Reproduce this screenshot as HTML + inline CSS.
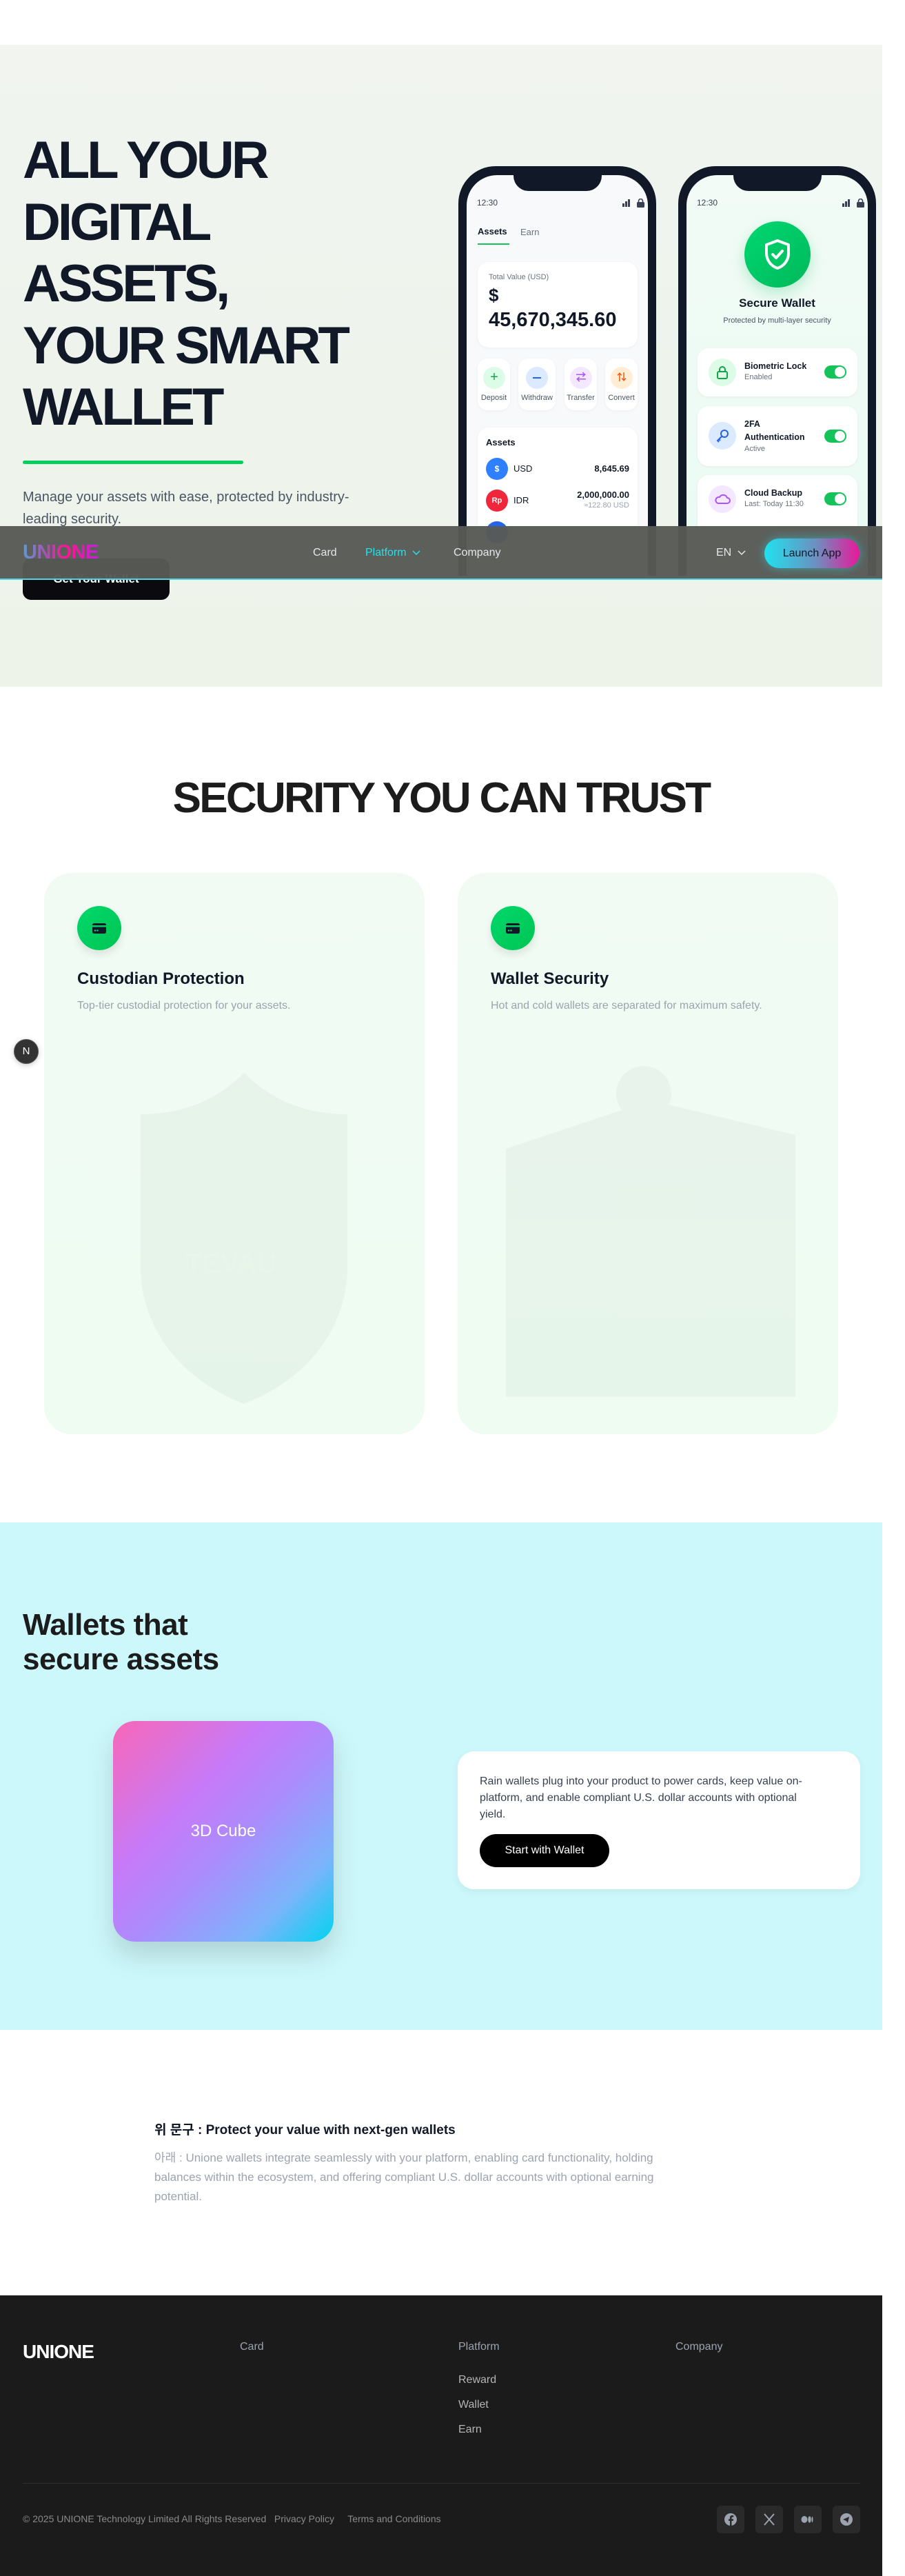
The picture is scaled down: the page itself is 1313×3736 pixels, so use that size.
<!DOCTYPE html>
<html><head><meta charset="utf-8">
<style>
*{margin:0;padding:0;box-sizing:border-box}
html,body{width:1313px;height:3736px;background:#fff;font-family:"Liberation Sans","Noto Sans CJK KR",sans-serif;overflow:hidden}
.wrap{position:relative;width:1280px;height:3736px;overflow:hidden}
.abs{position:absolute}
.hero{position:absolute;left:0;top:65px;width:1280px;height:931px;background:linear-gradient(180deg,#f1f4ef 0%,#eef3ec 60%,#eef3ea 100%);overflow:hidden}
.h1{position:absolute;left:33px;top:123px;font-size:76px;line-height:89.5px;font-weight:900;color:#111827;letter-spacing:-4px}
.clip{position:absolute;left:0;top:0;width:1280px;height:770px;overflow:hidden}
.phone{position:absolute;top:176px;width:287px;height:720px;background:#111827;border-radius:54px;padding:13px 12px}
.screen{width:100%;height:100%;border-radius:44px;background:#f8f9fb;position:relative;overflow:hidden}
.notch{position:absolute;left:68px;top:-2px;width:128px;height:25px;background:#111827;border-radius:0 0 22px 22px}
.t{position:absolute;font-size:12px;color:#374151}
.card{position:absolute;background:#fff;border-radius:14px;box-shadow:0 1px 4px rgba(0,0,0,.05)}
.circ{position:absolute;border-radius:50%}
.tog{position:absolute;width:32px;height:19px;border-radius:10px;background:#16c35a}
.tog:after{content:"";position:absolute;right:2px;top:2px;width:15px;height:15px;border-radius:50%;background:#fff}
.nav{position:absolute;left:0;top:763px;width:1280px;height:78px;background:rgba(88,90,86,.97);border-bottom:2px solid #4fd6df}
.sec-title{position:absolute;left:0;width:1280px;top:1122px;text-align:center;font-size:62px;font-weight:900;letter-spacing:-2.7px;color:#1c1c1c}
.fcard{position:absolute;top:1266px;width:552px;height:814px;border-radius:40px;background:linear-gradient(180deg,#f1fbf4,#eefcf2)}
.ic{position:absolute;left:48px;top:48px;width:64px;height:64px;border-radius:50%;background:linear-gradient(135deg,#00d86c,#00c553);box-shadow:0 6px 12px rgba(0,0,0,.1)}
</style></head><body><div class="wrap">

<div class="hero">
  <div class="h1">ALL YOUR<br>DIGITAL<br>ASSETS,<br>YOUR SMART<br>WALLET</div>
  <div class="abs" style="left:33px;top:603px;width:320px;height:5px;border-radius:3px;background:#00cf5c"></div>
  <div class="abs" style="left:33px;top:640px;width:525px;font-size:20px;line-height:32px;color:#4b5563">Manage your assets with ease, protected by industry-leading security.</div>
  <div class="abs" style="left:33px;top:745px;width:213px;height:60px;border-radius:12px;background:#0a0a0f;color:#fff;font-size:17px;font-weight:700;text-align:center;line-height:60px">Get Your Wallet</div>

 <div class="clip">
  <!-- left phone -->
  <div class="phone" style="left:665px">
    <div class="screen">
      <div class="notch"></div>
      <div class="t" style="left:15px;top:33px">12:30</div>
      <svg class="abs" style="left:226px;top:34px" width="34" height="13"><rect x="0" y="7" width="3" height="5" fill="#374151"/><rect x="4" y="4" width="3" height="8" fill="#374151"/><rect x="8" y="1" width="3" height="11" fill="#374151"/><rect x="21" y="5" width="11" height="8" rx="1.5" fill="#374151"/><path d="M23.5 5V3.5a3 3 0 0 1 6 0V5" stroke="#374151" stroke-width="1.6" fill="none"/></svg>
      <div class="t" style="left:16px;top:74px;font-size:13px;font-weight:700;color:#111827">Assets</div>
      <div class="t" style="left:78px;top:75px;font-size:13px;color:#6b7280">Earn</div>
      <div class="abs" style="left:16px;top:99px;width:46px;height:2px;background:#16c35a"></div>
      <div class="card" style="left:16px;top:126px;width:232px;height:124px;border-radius:16px">
        <div class="t" style="left:16px;top:16px;font-size:11px;color:#6b7280">Total Value (USD)</div>
        <div class="t" style="left:16px;top:33px;font-size:26px;font-weight:700;color:#111827">$</div>
        <div class="t" style="left:16px;top:68px;font-size:29px;font-weight:700;color:#111827;white-space:nowrap">45,670,345.60</div>
      </div>
      <div class="card" style="left:16px;top:266px;width:47px;height:75px"><div class="circ" style="left:8px;top:12px;width:32px;height:32px;background:#dcfce7;color:#16a34a;text-align:center;line-height:31px;font-size:20px">+</div><div class="t" style="left:0;width:47px;text-align:center;top:51px;font-size:11px;color:#4b5563">Deposit</div></div>
      <div class="card" style="left:75px;top:266px;width:54px;height:75px"><div class="circ" style="left:11px;top:12px;width:32px;height:32px;background:#dbeafe"><div class="abs" style="left:10px;top:15px;width:12px;height:2px;background:#2563eb"></div></div><div class="t" style="left:-4px;width:62px;text-align:center;top:51px;font-size:11px;color:#4b5563">Withdraw</div></div>
      <div class="card" style="left:142px;top:266px;width:47px;height:75px"><div class="circ" style="left:8px;top:12px;width:32px;height:32px;background:#f3e8ff;color:#a855f7;text-align:center;line-height:31px;font-size:15px;font-weight:700">⇄</div><div class="t" style="left:-4px;width:55px;text-align:center;top:51px;font-size:11px;color:#4b5563">Transfer</div></div>
      <div class="card" style="left:201px;top:266px;width:47px;height:75px"><div class="circ" style="left:8px;top:12px;width:32px;height:32px;background:#ffedd5;color:#ea580c;text-align:center;line-height:31px;font-size:14px;font-weight:700">⇅</div><div class="t" style="left:-4px;width:55px;text-align:center;top:51px;font-size:11px;color:#4b5563">Convert</div></div>
      <div class="card" style="left:16px;top:366px;width:232px;height:260px;border-radius:16px">
        <div class="t" style="left:12px;top:14px;font-size:13px;font-weight:700;color:#111827">Assets</div>
        <div class="circ" style="left:12px;top:44px;width:32px;height:32px;background:#2f80ff;color:#fff;text-align:center;line-height:32px;font-size:12px;font-weight:700">$</div>
        <div class="t" style="left:52px;top:52px;font-size:13px;color:#111827">USD</div>
        <div class="t" style="right:12px;top:52px;font-size:13px;font-weight:700;color:#111827">8,645.69</div>
        <div class="circ" style="left:12px;top:90px;width:32px;height:32px;background:#f0263a;color:#fff;text-align:center;line-height:32px;font-size:11px;font-weight:700">Rp</div>
        <div class="t" style="left:52px;top:98px;font-size:13px;color:#111827">IDR</div>
        <div class="t" style="right:12px;top:90px;font-size:13px;font-weight:700;color:#111827">2,000,000.00</div>
        <div class="t" style="right:12px;top:107px;font-size:11px;color:#9ca3af">≈122.80 USD</div>
        <div class="circ" style="left:12px;top:136px;width:32px;height:32px;background:#2563eb"></div>
      </div>
    </div>
  </div>

  <!-- right phone -->
  <div class="phone" style="left:984px">
    <div class="screen" style="background:linear-gradient(180deg,#f2fbf6,#e8fbf2)">
      <div class="notch"></div>
      <div class="t" style="left:15px;top:33px">12:30</div>
      <svg class="abs" style="left:226px;top:34px" width="34" height="13"><rect x="0" y="7" width="3" height="5" fill="#374151"/><rect x="4" y="4" width="3" height="8" fill="#374151"/><rect x="8" y="1" width="3" height="11" fill="#374151"/><rect x="21" y="5" width="11" height="8" rx="1.5" fill="#374151"/><path d="M23.5 5V3.5a3 3 0 0 1 6 0V5" stroke="#374151" stroke-width="1.6" fill="none"/></svg>
      <div class="circ" style="left:84px;top:67px;width:96px;height:96px;background:linear-gradient(135deg,#00d872,#00b85a);box-shadow:0 8px 20px rgba(0,190,90,.25)">
        <svg width="96" height="96" viewBox="0 0 96 96"><path d="M48 28l16 6v12c0 11-7 19-16 22-9-3-16-11-16-22V34z" fill="none" stroke="#fff" stroke-width="4" stroke-linejoin="round"/><path d="M41 48l5 5 9-10" fill="none" stroke="#fff" stroke-width="4" stroke-linecap="round" stroke-linejoin="round"/></svg>
      </div>
      <div class="t" style="left:0;width:263px;text-align:center;top:176px;font-size:17px;font-weight:700;color:#111827">Secure Wallet</div>
      <div class="t" style="left:0;width:263px;text-align:center;top:205px;font-size:11px;color:#4b5563">Protected by multi-layer security</div>
      <div class="card" style="left:16px;top:251px;width:232px;height:70px;border-radius:16px">
        <div class="circ" style="left:16px;top:15px;width:40px;height:40px;background:#dcfce7"><svg width="40" height="40"><rect x="13" y="19" width="14" height="10" rx="2" fill="none" stroke="#16a34a" stroke-width="2"/><path d="M16 19v-3a4 4 0 0 1 8 0v3" fill="none" stroke="#16a34a" stroke-width="2"/></svg></div>
        <div class="t" style="left:68px;top:19px;font-size:12.5px;font-weight:700;color:#111827">Biometric Lock</div>
        <div class="t" style="left:68px;top:36px;font-size:11px;color:#6b7280">Enabled</div>
        <div class="tog" style="left:184px;top:25px"></div>
      </div>
      <div class="card" style="left:16px;top:335px;width:232px;height:87px;border-radius:16px">
        <div class="circ" style="left:16px;top:23px;width:40px;height:40px;background:#dbeafe"><svg width="40" height="40"><circle cx="23" cy="17" r="5" fill="none" stroke="#2563eb" stroke-width="2"/><path d="M19.5 20.5L13 27l2 2M15 25l2 2" fill="none" stroke="#2563eb" stroke-width="2"/></svg></div>
        <div class="t" style="left:68px;top:17px;font-size:12.5px;font-weight:700;color:#111827;line-height:19px">2FA<br>Authentication</div>
        <div class="t" style="left:68px;top:56px;font-size:11px;color:#6b7280">Active</div>
        <div class="tog" style="left:184px;top:34px"></div>
      </div>
      <div class="card" style="left:16px;top:435px;width:232px;height:90px;border-radius:16px">
        <div class="circ" style="left:16px;top:15px;width:40px;height:40px;background:#f3e8ff"><svg width="40" height="40"><path d="M14 26h13a4 4 0 0 0 0-8 6 6 0 0 0-11-1 4.5 4.5 0 0 0-2 9z" fill="none" stroke="#a855f7" stroke-width="2"/></svg></div>
        <div class="t" style="left:68px;top:19px;font-size:12.5px;font-weight:700;color:#111827">Cloud Backup</div>
        <div class="t" style="left:68px;top:36px;font-size:11px;color:#6b7280">Last: Today 11:30</div>
        <div class="tog" style="left:184px;top:25px"></div>
      </div>
    </div>
  </div>
 </div>
</div>

<!-- nav -->
<div class="nav">
  <div class="abs" style="left:33px;top:22px;font-size:29px;font-weight:700;letter-spacing:-0.5px;background:linear-gradient(90deg,#5b9bd5,#c03ca8 40%,#ff1493 60%,#c81ee0);-webkit-background-clip:text;background-clip:text;color:transparent">UNIONE</div>
  <div class="abs" style="left:454px;top:30px;font-size:16px;color:#e5e7eb">Card</div>
  <div class="abs" style="left:530px;top:30px;font-size:16px;color:#22e3ee">Platform <svg width="12" height="8" style="margin-left:4px"><path d="M1 1l5 5 5-5" fill="none" stroke="#22e3ee" stroke-width="1.5"/></svg></div>
  <div class="abs" style="left:658px;top:30px;font-size:16px;color:#e5e7eb">Company</div>
  <div class="abs" style="left:1039px;top:30px;font-size:16px;color:#e5e7eb">EN <svg width="12" height="8" style="margin-left:4px"><path d="M1 1l5 5 5-5" fill="none" stroke="#e5e7eb" stroke-width="1.5"/></svg></div>
  <div class="abs" style="left:1109px;top:18px;width:138px;height:43px;border-radius:22px;background:linear-gradient(90deg,#1fe2ee,#6e8ec0 55%,#e8189a);box-shadow:0 0 14px rgba(31,226,238,.5);color:#111827;font-size:16px;text-align:center;line-height:43px">Launch App</div>
</div>

<!-- security -->
<div class="sec-title">SECURITY YOU CAN TRUST</div>
<div class="fcard" style="left:64px">
  <div class="ic"><svg width="64" height="64"><rect x="22" y="25" width="20" height="15" rx="2.5" fill="#111827"/><rect x="22" y="28" width="20" height="2.5" fill="#00d065"/><circle cx="26" cy="35.5" r="1.3" fill="#00d065"/><circle cx="29.5" cy="35.5" r="1.3" fill="#00d065"/></svg></div>
  <div class="abs" style="left:48px;top:140px;font-size:24px;font-weight:700;color:#111827">Custodian Protection</div>
  <div class="abs" style="left:48px;top:184px;font-size:16px;color:#9ca3af">Top-tier custodial protection for your assets.</div>
  <svg class="abs" style="left:90px;top:280px;opacity:.035" width="400" height="500"><path d="M200 10c40 40 90 60 150 60v220c0 100-70 170-150 200C120 460 50 390 50 290V70c60 0 110-20 150-60z" fill="#1a3a1a"/><text x="115" y="300" font-size="40" font-weight="900" fill="#4a7a2a" font-family="Liberation Sans">TEVAU</text></svg>
</div>
<div class="fcard" style="left:664px">
  <div class="ic"><svg width="64" height="64"><rect x="22" y="25" width="20" height="15" rx="2.5" fill="#111827"/><rect x="22" y="28" width="20" height="2.5" fill="#00d065"/><circle cx="26" cy="35.5" r="1.3" fill="#00d065"/><circle cx="29.5" cy="35.5" r="1.3" fill="#00d065"/></svg></div>
  <div class="abs" style="left:48px;top:140px;font-size:24px;font-weight:700;color:#111827">Wallet Security</div>
  <div class="abs" style="left:48px;top:184px;font-size:16px;color:#9ca3af">Hot and cold wallets are separated for maximum safety.</div>
  <svg class="abs" style="left:60px;top:270px;opacity:.03" width="440" height="500"><path d="M10 130l210-70 210 50v380H10z" fill="#1a3a1a"/><circle cx="210" cy="50" r="40" fill="#1a3a1a"/></svg>
</div>
<div class="circ" style="left:20px;top:1507px;width:36px;height:36px;background:#333;border:1px solid #555;color:#fff;text-align:center;line-height:34px;font-size:15px;box-shadow:0 2px 8px rgba(0,0,0,.2)">N</div>

<!-- wallets -->
<div class="abs" style="left:0;top:2208px;width:1280px;height:736px;background:#cdf8fb">
  <div class="abs" style="left:33px;top:124px;font-size:44px;font-weight:700;line-height:50px;color:#1c1c1c;letter-spacing:-0.5px">Wallets that<br>secure assets</div>
  <div class="abs" style="left:164px;top:288px;width:320px;height:320px;border-radius:32px;background:linear-gradient(135deg,#f867b8 0%,#c77af8 35%,#ab8cfd 55%,#7cb4fb 80%,#00d4f0 100%);box-shadow:0 20px 40px rgba(0,0,0,.15);color:#fff;font-size:24px;text-align:center;line-height:320px">3D Cube</div>
  <div class="abs" style="left:664px;top:332px;width:584px;height:200px;border-radius:24px;background:#fff;box-shadow:0 4px 12px rgba(0,0,0,.06)">
    <div class="abs" style="left:32px;top:32px;width:488px;font-size:16px;line-height:24px;color:#374151">Rain wallets plug into your product to power cards, keep value on-platform, and enable compliant U.S. dollar accounts with optional yield.</div>
    <div class="abs" style="left:32px;top:120px;width:188px;height:48px;border-radius:24px;background:#000;color:#fff;font-size:16px;text-align:center;line-height:48px">Start with Wallet</div>
  </div>
</div>

<!-- quote -->
<div class="abs" style="left:224px;top:3074px;font-size:19px;font-weight:700;color:#111827">위 문구 : Protect your value with next-gen wallets</div>
<div class="abs" style="left:224px;top:3116px;width:780px;font-size:17px;line-height:28px;color:#9ca3af">아래 : Unione wallets integrate seamlessly with your platform, enabling card functionality, holding balances within the ecosystem, and offering compliant U.S. dollar accounts with optional earning potential.</div>

<!-- footer -->
<div class="abs" style="left:0;top:3329px;width:1280px;height:407px;background:#1b1b1b">
  <div class="abs" style="left:33px;top:66px;font-size:28px;font-weight:700;color:#fff;letter-spacing:-1px">UNIONE</div>
  <div class="abs" style="left:348px;top:66px;font-size:16px;color:#9ca3af">Card</div>
  <div class="abs" style="left:665px;top:66px;font-size:16px;color:#9ca3af">Platform</div>
  <div class="abs" style="left:980px;top:66px;font-size:16px;color:#9ca3af">Company</div>
  <div class="abs" style="left:665px;top:114px;font-size:16px;color:#b5b5b5">Reward</div>
  <div class="abs" style="left:665px;top:150px;font-size:16px;color:#b5b5b5">Wallet</div>
  <div class="abs" style="left:665px;top:186px;font-size:16px;color:#b5b5b5">Earn</div>
  <div class="abs" style="left:33px;top:272px;width:1215px;height:1px;background:#2e2e2e"></div>
  <div class="abs" style="left:33px;top:316px;font-size:14px;color:#8a8a8a;white-space:nowrap">© 2025 UNIONE Technology Limited All Rights Reserved &nbsp;&nbsp;Privacy Policy &nbsp;&nbsp;&nbsp; Terms and Conditions</div>
  <div class="abs" style="left:1040px;top:305px;width:40px;height:40px;border-radius:6px;background:#2a2a2a"><svg width="40" height="40"><circle cx="20" cy="20" r="9" fill="#9ca3af"/><path d="M21.5 29v-7h2.3l.4-2.6h-2.7v-1.6c0-.8.3-1.3 1.4-1.3h1.4v-2.3a14 14 0 0 0-2-.2c-2 0-3.3 1.2-3.3 3.4v2H17V22h2v7z" fill="#2a2a2a"/></svg></div>
  <div class="abs" style="left:1096px;top:305px;width:40px;height:40px;border-radius:6px;background:#2a2a2a"><svg width="40" height="40"><path d="M13 12l14 16M27 12L13 28" stroke="#9ca3af" stroke-width="2"/></svg></div>
  <div class="abs" style="left:1152px;top:305px;width:40px;height:40px;border-radius:6px;background:#2a2a2a"><svg width="40" height="40"><ellipse cx="15" cy="20" rx="4.5" ry="5" fill="#9ca3af"/><ellipse cx="22.5" cy="20" rx="2.2" ry="4.7" fill="#9ca3af"/><ellipse cx="26.5" cy="20" rx="1" ry="4.3" fill="#9ca3af"/></svg></div>
  <div class="abs" style="left:1208px;top:305px;width:40px;height:40px;border-radius:6px;background:#2a2a2a"><svg width="40" height="40"><circle cx="20" cy="20" r="9" fill="#9ca3af"/><path d="M15 20l9-4-2 9-2.5-3z" fill="#2a2a2a"/></svg></div>
</div>

</div></body></html>
